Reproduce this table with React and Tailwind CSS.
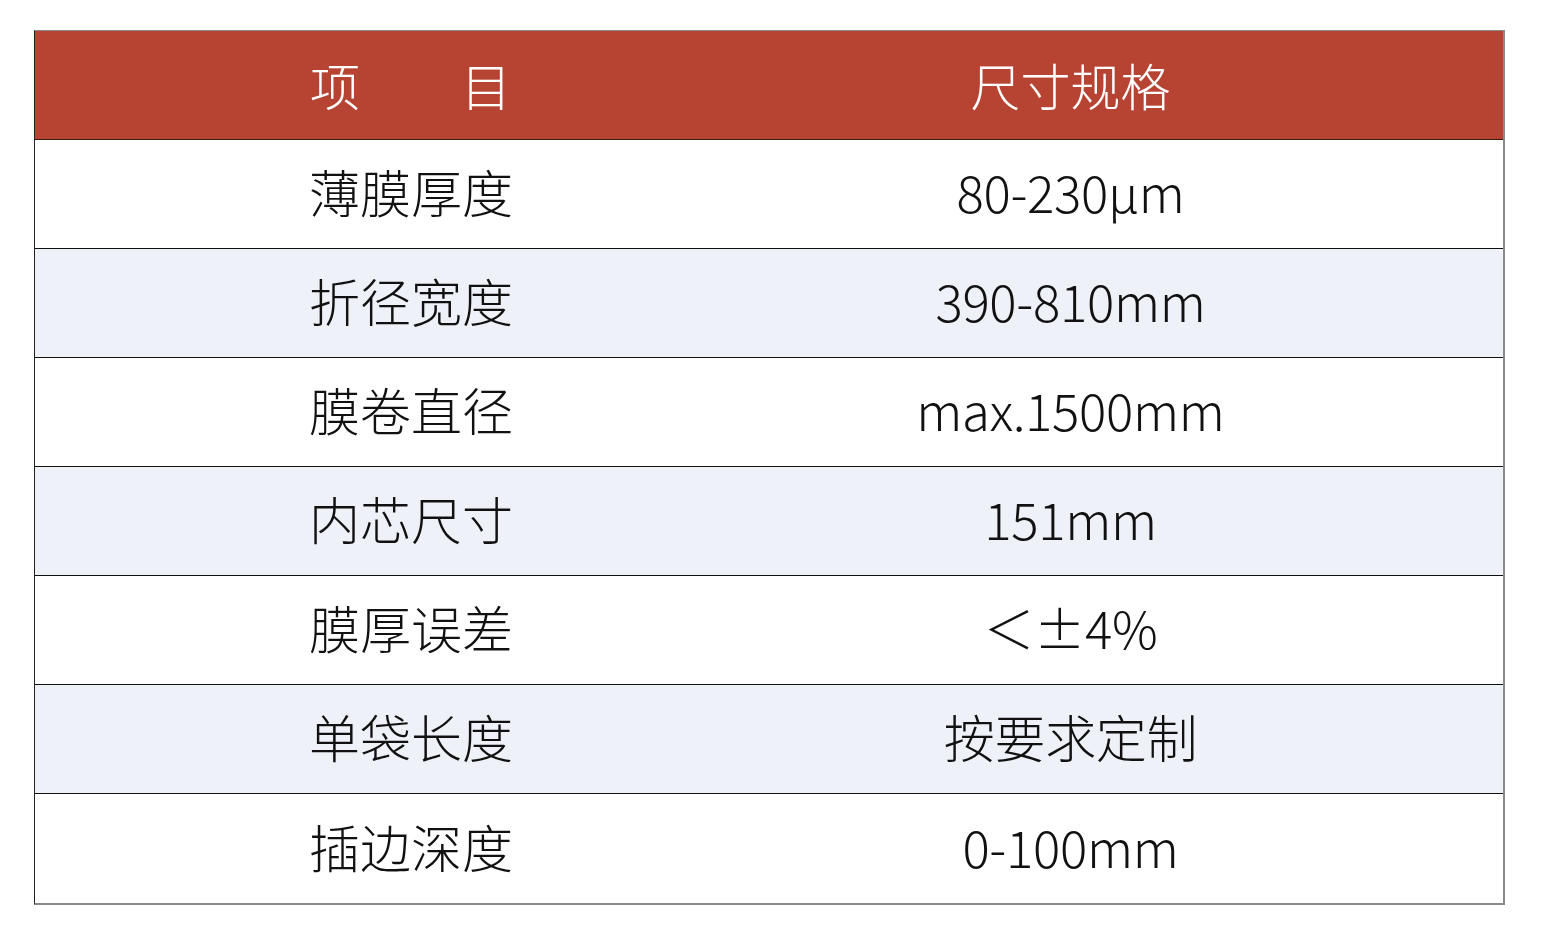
const ROWS = [
  ['薄膜厚度', '80-230μm'],
  ['折径宽度', '390-810mm'],
  ['膜卷直径', 'max.1500mm'],
  ['内芯尺寸', '151mm'],
  ['膜厚误差', '＜±4%'],
  ['单袋长度', '按要求定制'],
  ['插边深度', '0-100mm'],
];

const FONT = { fontFamily: '"Noto Sans CJK SC", "Noto Sans", sans-serif' };

export default function App() {
  return (
    <div className="min-h-screen bg-white pt-[30px] pl-[34px]" style={FONT}>
      <div className="w-[1471px] border-t border-t-[#8a8a8a] border-l border-l-[#222] border-r-2 border-r-[#8a8a8a] border-b-2 border-b-[#8a8a8a]">
        {/* Header */}
        <div className="grid grid-cols-[603px_1fr] h-[109px] bg-[#b74433] border-b border-b-[#3a1a15] text-white text-[50px] font-light pb-[1px]">
          <div className="flex items-center pl-[275px]">
            <div className="w-[201px] flex justify-between">
              <span>项</span>
              <span>目</span>
            </div>
          </div>
          <div className="flex items-center justify-center">尺寸规格</div>
        </div>

        {/* Rows */}
        {ROWS.map(([name, value], i) => (
          <div
            key={name}
            className={
              'grid grid-cols-[603px_1fr] h-[109px] text-[#111] text-[51px] font-light pb-[5px] ' +
              (i % 2 === 1 ? 'bg-[#eef2f8] ' : 'bg-white ') +
              (i < ROWS.length - 1 ? 'border-b border-b-[#111]' : '')
            }
          >
            <div className="flex items-center pl-[274px]">{name}</div>
            <div className="flex items-center justify-center">
              <span className="tracking-[-0.3px]">{value}</span>
            </div>
          </div>
        ))}
      </div>
    </div>
  );
}
